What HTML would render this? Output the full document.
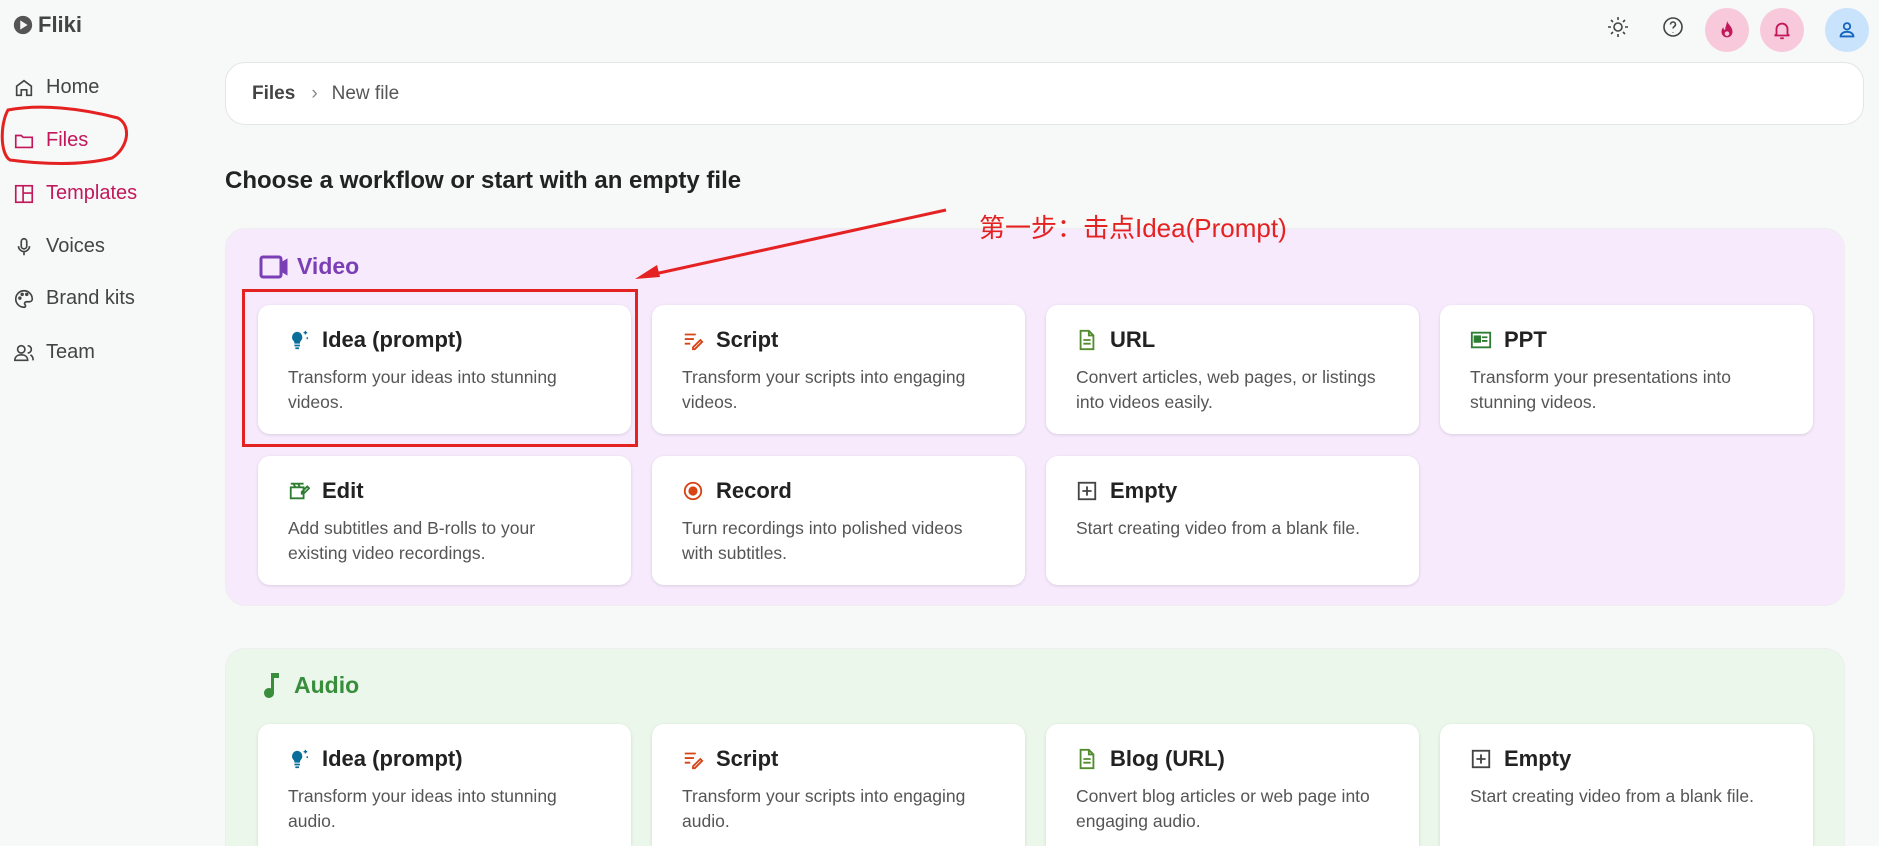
<!DOCTYPE html>
<html><head><meta charset="utf-8"><style>
*{box-sizing:border-box;margin:0;padding:0}
html,body{width:1879px;height:846px;overflow:hidden}
body{background:#f7f8f8;font-family:"Liberation Sans","Noto Sans CJK SC",sans-serif;color:#222;position:relative}
.abs{position:absolute}
.nav{position:absolute;left:13px;display:flex;align-items:center;font-size:20px;color:#444}
.nav svg{width:22px;height:22px;margin-right:11px}
.crumb{left:225px;top:62px;width:1639px;height:63px;background:#fff;border:1px solid #e5e5e5;border-radius:20px;display:flex;align-items:center;padding-left:26px;font-size:19px;color:#555}
.sec{left:225px;width:1620px;border-radius:20px;border:1px solid #eee}
.card{position:absolute;width:373px;height:129px;background:#fff;border-radius:12px;box-shadow:0 1px 3px rgba(0,0,0,.12);padding:22px 30px}
.card h3{font-size:22px;font-weight:bold;color:#222;display:flex;align-items:center;height:26px}
.card h3 svg{width:22px;height:22px;margin-right:12px}
.card p{margin-top:12px;font-size:17.5px;line-height:25px;color:#555;width:305px}
.circ{position:absolute;top:8px;width:44px;height:44px;border-radius:50%;display:flex;align-items:center;justify-content:center}
</style></head><body>
<div class="abs" style="left:12px;top:12px;display:flex;align-items:center;font-size:22px;font-weight:bold;color:#444">
<svg width="22" height="22" viewBox="0 0 24 24"><circle cx="12" cy="12" r="10" fill="#555"/><path d="M9 7l8 5-8 5z" fill="#f7f8f8"/></svg><span style="margin-left:4px">Fliki</span></div>

<div class="nav" style="top:76px"><svg viewBox="0 0 24 24" fill="none" stroke="#444" stroke-width="1.8"><path d="M4 10l8-6 8 6v10h-5v-6h-6v6H4z"/></svg>Home</div>
<div class="nav" style="top:129px;color:#c2185b"><svg viewBox="0 0 24 24" fill="none" stroke="#c2185b" stroke-width="1.8"><path d="M3 6h6l2 2h10v11H3z"/></svg>Files</div>
<div class="nav" style="top:182px;color:#c2185b"><svg viewBox="0 0 24 24" fill="none" stroke="#c2185b" stroke-width="1.8"><rect x="3" y="3" width="18" height="18"/><path d="M11 3v18M11 11h10"/></svg>Templates</div>
<div class="nav" style="top:235px"><svg viewBox="0 0 24 24" fill="none" stroke="#444" stroke-width="1.8"><rect x="9" y="3" width="6" height="11" rx="3"/><path d="M6 11a6 6 0 0012 0M12 17v4"/></svg>Voices</div>
<div class="nav" style="top:287px"><svg viewBox="0 0 24 24" fill="none" stroke="#444" stroke-width="1.8"><path d="M12 3a9 9 0 000 18c2 0 2-2 1-3s0-3 2-3h3a3 3 0 003-3c0-5-4-9-9-9z"/><circle cx="7.5" cy="11" r="1"/><circle cx="10" cy="7" r="1"/><circle cx="15" cy="7" r="1"/></svg>Brand kits</div>
<div class="nav" style="top:341px"><svg viewBox="0 0 24 24" fill="none" stroke="#444" stroke-width="1.8"><circle cx="9" cy="8" r="4"/><path d="M2 20c0-4 3-6 7-6s7 2 7 6zM16 4a4 4 0 010 8M19 14c2 1 3 3 3 6"/></svg>Team</div>

<svg class="abs" style="left:0;top:104px" width="140" height="66"><path d="M8 6C40 0 80 4 118 14c14 8 10 30-6 40C80 62 40 60 10 56 0 50 0 20 8 6z" fill="none" stroke="#e52222" stroke-width="3"/></svg>

<svg class="abs" style="left:1606px;top:15px" width="24" height="24" viewBox="0 0 24 24" fill="none" stroke="#444" stroke-width="1.6"><circle cx="12" cy="12" r="4"/><path d="M12 2v3M12 19v3M2 12h3M19 12h3M5 5l2 2M17 17l2 2M5 19l2-2M17 7l2-2"/></svg>
<svg class="abs" style="left:1661px;top:15px" width="24" height="24" viewBox="0 0 24 24" fill="none" stroke="#444" stroke-width="1.6"><circle cx="12" cy="12" r="9"/><path d="M9.5 9.5a2.5 2.5 0 115 0c0 2-2.5 2-2.5 4M12 17v.5"/></svg>
<div class="circ" style="left:1705px;background:#f8c9da"><svg width="22" height="22" viewBox="0 0 24 24"><path d="M12 2c1 4 6 6 6 12a6 6 0 01-12 0c0-3 2-5 2-5 0 2 1 3 2 3 0-4 2-6 2-10z" fill="#c2185b"/><circle cx="12" cy="16" r="2.5" fill="#f8c9da"/></svg></div>
<div class="circ" style="left:1760px;background:#f8c9da"><svg width="22" height="22" viewBox="0 0 24 24" fill="none" stroke="#c2185b" stroke-width="2"><path d="M6 17V11a6 6 0 0112 0v6l2 1H4zM10 21h4"/></svg></div>
<div class="circ" style="left:1825px;background:#c8e3fb"><svg width="22" height="22" viewBox="0 0 24 24" fill="none" stroke="#1565c0" stroke-width="2"><circle cx="12" cy="8" r="3.5"/><path d="M5 19c0-3 3-5 7-5s7 2 7 5z"/></svg></div>

<div class="abs crumb"><b style="color:#444;font-weight:bold">Files</b><span style="margin:0 14px 0 16px;color:#888">›</span>New file</div>

<div class="abs" style="left:225px;top:167px;font-size:24px;font-weight:bold;color:#222">Choose a workflow or start with an empty file</div>

<div class="abs sec" style="top:228px;height:378px;background:#f6eafc"></div>
<div class="abs" style="left:259px;top:253px;display:flex;align-items:center;font-size:23px;font-weight:bold;color:#7b3fb5"><svg width="30" height="26" viewBox="0 0 30 26" fill="none" stroke="#7b3fb5" stroke-width="3"><rect x="2" y="3" width="20" height="20" rx="2"/><path d="M22 10l5-3v12l-5-3z" fill="#7b3fb5"/></svg><span style="margin-left:8px">Video</span></div>

<div class="card" style="left:258px;top:305px"><h3><svg viewBox="0 0 24 24"><path d="M10 3a6 6 0 00-4 10c1 1 1 2 1 3h6c0-1 0-2 1-3a6 6 0 00-4-10z" fill="#0a6e9a"/><path d="M7 18h6M8 21h4" stroke="#0a6e9a" stroke-width="2"/><path d="M19 2v4M17 4h4M21 9v2" stroke="#0a6e9a" stroke-width="1.5"/></svg>Idea (prompt)</h3><p>Transform your ideas into stunning videos.</p></div>
<div class="card" style="left:652px;top:305px"><h3><svg viewBox="0 0 24 24" fill="none" stroke="#d84315" stroke-width="2"><path d="M3 6h12M3 11h10M3 16h6M12 20l8-8 2 2-8 8h-2z"/></svg>Script</h3><p>Transform your scripts into engaging videos.</p></div>
<div class="card" style="left:1046px;top:305px"><h3><svg viewBox="0 0 24 24" fill="none" stroke="#558b2f" stroke-width="2"><path d="M5 2h9l5 5v15H5zM14 2v5h5M8 12h8M8 16h8"/></svg>URL</h3><p>Convert articles, web pages, or listings into videos easily.</p></div>
<div class="card" style="left:1440px;top:305px"><h3><svg viewBox="0 0 24 24" fill="none" stroke="#2e7d32" stroke-width="2"><rect x="2" y="4" width="20" height="16"/><rect x="5" y="8" width="6" height="6" fill="#2e7d32"/><path d="M13 9h6M13 13h6"/></svg>PPT</h3><p>Transform your presentations into stunning videos.</p></div>
<div class="card" style="left:258px;top:456px"><h3><svg viewBox="0 0 24 24" fill="none" stroke="#2e7d32" stroke-width="2"><path d="M3 8h14v12H3zM3 4l14 0M6 4l2 4M11 4l2 4M15 13l6-6 2 2-6 6h-2z"/></svg>Edit</h3><p>Add subtitles and B-rolls to your existing video recordings.</p></div>
<div class="card" style="left:652px;top:456px"><h3><svg viewBox="0 0 24 24"><circle cx="12" cy="12" r="9" fill="none" stroke="#d84315" stroke-width="2"/><circle cx="12" cy="12" r="5" fill="#d84315"/></svg>Record</h3><p>Turn recordings into polished videos with subtitles.</p></div>
<div class="card" style="left:1046px;top:456px"><h3><svg viewBox="0 0 24 24" fill="none" stroke="#444" stroke-width="2"><rect x="3" y="3" width="18" height="18"/><path d="M12 7v10M7 12h10"/></svg>Empty</h3><p>Start creating video from a blank file.</p></div>

<div class="abs sec" style="top:648px;height:198px;background:#eaf7ea;border-bottom:none;border-radius:20px 20px 0 0"></div>
<div class="abs" style="left:262px;top:671px;display:flex;align-items:center;font-size:23px;font-weight:bold;color:#388e3c"><svg width="20" height="28" viewBox="0 0 20 28"><path d="M9 2h8v5h-5v15a5 5 0 11-3-4.6z" fill="#388e3c"/></svg><span style="margin-left:12px">Audio</span></div>
<div class="card" style="left:258px;top:724px;height:122px;border-radius:12px 12px 0 0"><h3><svg viewBox="0 0 24 24"><path d="M10 3a6 6 0 00-4 10c1 1 1 2 1 3h6c0-1 0-2 1-3a6 6 0 00-4-10z" fill="#0a6e9a"/><path d="M7 18h6M8 21h4" stroke="#0a6e9a" stroke-width="2"/><path d="M19 2v4M17 4h4M21 9v2" stroke="#0a6e9a" stroke-width="1.5"/></svg>Idea (prompt)</h3><p>Transform your ideas into stunning audio.</p></div>
<div class="card" style="left:652px;top:724px;height:122px;border-radius:12px 12px 0 0"><h3><svg viewBox="0 0 24 24" fill="none" stroke="#d84315" stroke-width="2"><path d="M3 6h12M3 11h10M3 16h6M12 20l8-8 2 2-8 8h-2z"/></svg>Script</h3><p>Transform your scripts into engaging audio.</p></div>
<div class="card" style="left:1046px;top:724px;height:122px;border-radius:12px 12px 0 0"><h3><svg viewBox="0 0 24 24" fill="none" stroke="#558b2f" stroke-width="2"><path d="M5 2h9l5 5v15H5zM14 2v5h5M8 12h8M8 16h8"/></svg>Blog (URL)</h3><p>Convert blog articles or web page into engaging audio.</p></div>
<div class="card" style="left:1440px;top:724px;height:122px;border-radius:12px 12px 0 0"><h3><svg viewBox="0 0 24 24" fill="none" stroke="#444" stroke-width="2"><rect x="3" y="3" width="18" height="18"/><path d="M12 7v10M7 12h10"/></svg>Empty</h3><p>Start creating video from a blank file.</p></div>

<div class="abs" style="left:242px;top:289px;width:396px;height:158px;border:3px solid #e52222"></div>
<svg class="abs" style="left:0;top:0" width="1879" height="846"><path d="M946 210L650 275" stroke="#e52222" stroke-width="3"/><path d="M635 279l22-14 3 12z" fill="#e52222"/></svg>
<div class="abs" style="left:979px;top:208px;font-size:26px;color:#e52222">第一步：击点Idea(Prompt)</div>
</body></html>
